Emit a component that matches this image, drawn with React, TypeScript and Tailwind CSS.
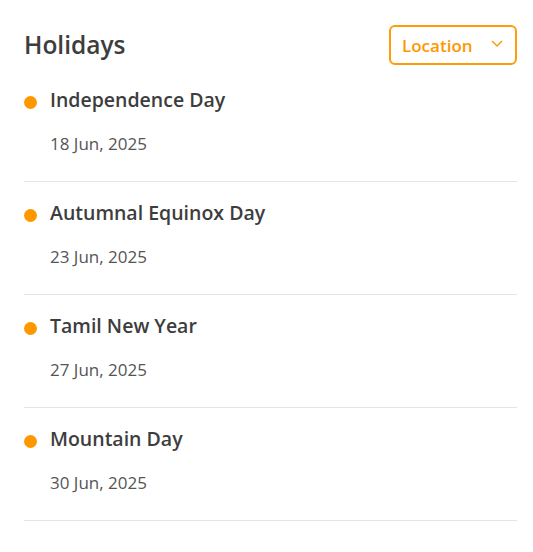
import React from 'react';

const holidays = [
  { name: 'Independence Day', date: '18 Jun, 2025' },
  { name: 'Autumnal Equinox Day', date: '23 Jun, 2025' },
  { name: 'Tamil New Year', date: '27 Jun, 2025' },
  { name: 'Mountain Day', date: '30 Jun, 2025' },
];

export default function App() {
  return (
    <div className="min-h-screen bg-white pl-6 pr-4 pt-[25px] text-[#3d3d3d]" style={{ fontFamily: '"Open Sans", "Noto Sans", sans-serif' }}>
      {/* header */}
      <div className="flex items-center justify-between h-10 mb-1">
        <h1 className="text-[24.5px] font-semibold leading-none">Holidays</h1>
        <button className="flex items-center justify-between w-32 h-10 pl-[11px] pr-[10px] border-2 border-[#ff9c0a] rounded-md text-[#ff9800] text-[17px] font-semibold">
          <span className="mt-[2px]">Location</span>
          <svg width="16" height="16" viewBox="0 0 24 24" fill="none" stroke="currentColor" strokeWidth="2" strokeLinecap="round" strokeLinejoin="round" className="-mt-[2px]">
            <path d="M5 8l7 7 7-7" />
          </svg>
        </button>
      </div>

      {/* list */}
      <ul>
        {holidays.map((h) => (
          <li key={h.name} className="pt-[18px] pb-[25px] border-b border-[#e4e4e4]">
            <div className="flex items-center gap-[13px] h-[26px]">
              <span className="w-[13px] h-[13px] rounded-full bg-[#ff9800] mt-[4px]" />
              <span className="text-[19.5px] font-semibold leading-[26px]">{h.name}</span>
            </div>
            <div className="pl-[26px] mt-[19px] text-[17px] leading-6 text-[#555]">{h.date}</div>
          </li>
        ))}
      </ul>
    </div>
  );
}
